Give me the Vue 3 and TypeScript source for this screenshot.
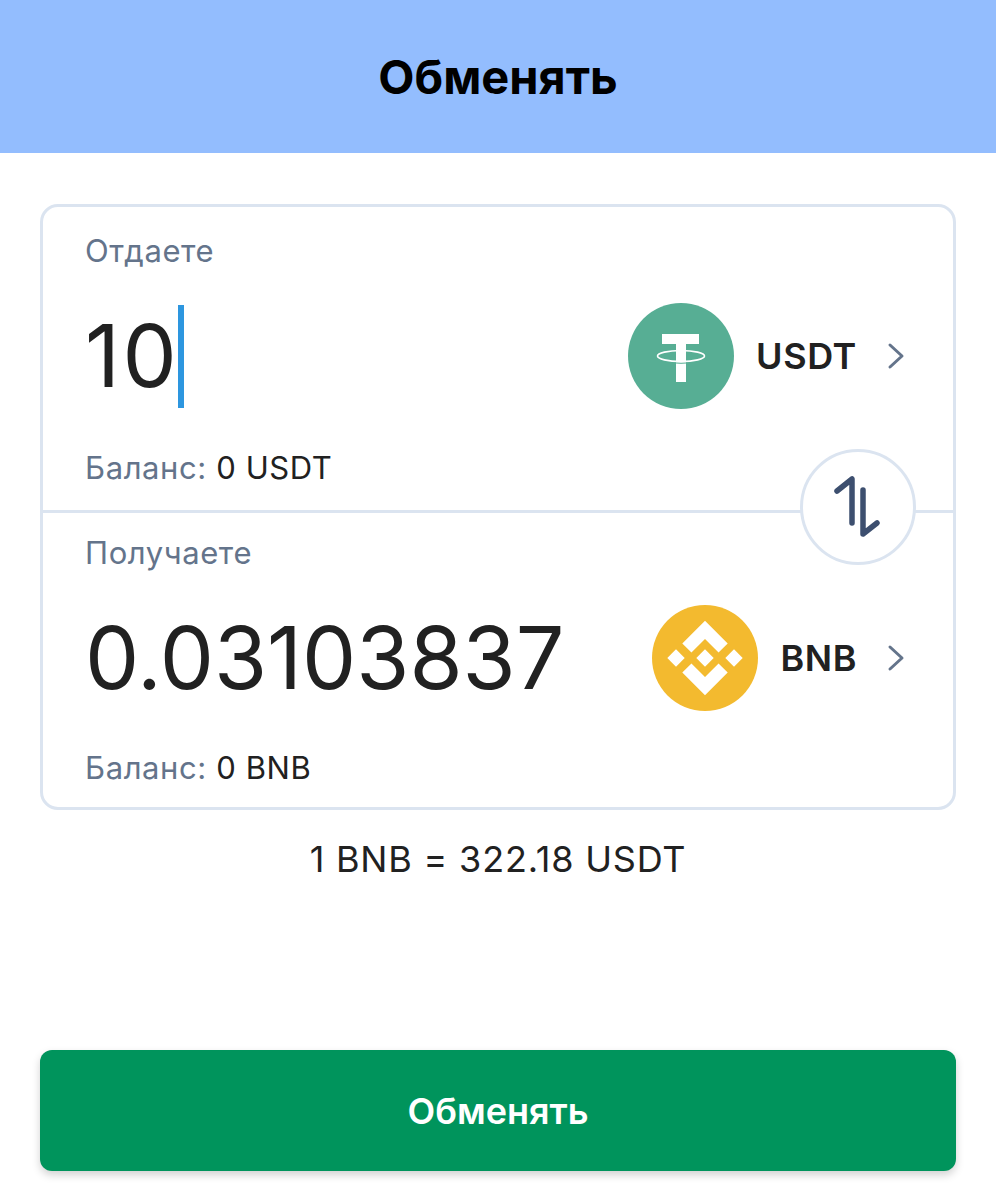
<script setup lang="ts">
interface Panel {
  label: string
  value: string
  symbol: string
  balance: string
  focused: boolean
}

const panels: Panel[] = [
  { label: 'Отдаете', value: '10', symbol: 'USDT', balance: '0 USDT', focused: true },
  { label: 'Получаете', value: '0.03103837', symbol: 'BNB', balance: '0 BNB', focused: false },
]
</script>

<template>
  <div class="page">
    <header class="header">Обменять</header>
    <main class="content">
      <section class="card">
        <div v-for="p in panels" :key="p.symbol" class="panel">
          <div class="label">{{ p.label }}</div>
          <div class="row">
            <div class="value" :class="{ editing: p.focused }">{{ p.value }}<span v-if="p.focused" class="caret"></span></div>
            <div class="token">
              <svg v-if="p.symbol === 'USDT'" class="coin" viewBox="0 0 106 106">
                <circle cx="53" cy="53" r="53" fill="#57ae94" />
                <path fill="#fff" d="M34 31h37v10H58v38H48V41H34z" />
                <ellipse cx="53" cy="53" rx="23.500" ry="5.500" fill="none" stroke="#fff" stroke-width="1.600" />
                <path d="M48 60q5 .6 10 0" fill="none" stroke="#57ae94" stroke-width="1" />
              </svg>
              <svg v-else class="coin" viewBox="0 0 106 106">
                <circle cx="53" cy="53" r="53" fill="#f3ba2f" />
                <g fill="#fff">
                  <polygon points="53,15.700 75.700,38.400 66.550,47.550 53,34 39.450,47.550 30.300,38.400" />
                  <polygon points="53,90.300 75.700,67.600 66.550,58.450 53,72 39.450,58.450 30.300,67.600" />
                  <polygon points="53,44.300 61.700,53 53,61.700 44.300,53" />
                  <polygon points="24,44.300 32.700,53 24,61.700 15.300,53" />
                  <polygon points="82,44.300 90.700,53 82,61.700 73.300,53" />
                </g>
              </svg>
              <span class="symbol">{{ p.symbol }}</span>
              <svg class="chev" viewBox="0 0 18 28">
                <path d="M3 3l12 11L3 25" fill="none" stroke="#64748b" stroke-width="3" stroke-linecap="round" stroke-linejoin="round" />
              </svg>
            </div>
          </div>
          <div class="balance"><span class="muted">Баланс:</span> {{ p.balance }}</div>
        </div>
        <button class="swap" type="button" aria-label="Поменять местами">
          <svg viewBox="0 0 48 64" class="swap-icon">
            <path d="M3 16L18 4v44" fill="none" stroke="#3d4f6f" stroke-width="5.500" stroke-linecap="round" stroke-linejoin="round" />
            <path d="M29 15v44l14-11" fill="none" stroke="#3d4f6f" stroke-width="5.500" stroke-linecap="round" stroke-linejoin="round" />
          </svg>
        </button>
      </section>
      <p class="rate">1 BNB = 322.18 USDT</p>
      <button class="submit" type="button">Обменять</button>
    </main>
  </div>
</template>

<style>
html, body { background: #fff; }
</style>

<style scoped>
.page {
  width: 996px;
  height: 1200px;
  overflow: hidden;
  background: #fff;
  font-family: Inter, "Liberation Sans", sans-serif;
  color: #212121;
}
.header {
  height: 153px;
  background: #93bdfe;
  display: flex;
  align-items: center;
  justify-content: center;
  color: #000;
  font-size: 47px;
  font-weight: 700;
}
.content {
  padding: 51px 40px 0;
  display: flex;
  flex-direction: column;
}
.card {
  position: relative;
  height: 606px;
  box-sizing: border-box;
  border: 3px solid #dbe4f0;
  border-radius: 18px;
  display: flex;
  flex-direction: column;
}
.panel {
  padding: 26px 42px 0;
  box-sizing: border-box;
  height: 303px;
}
.panel + .panel {
  border-top: 3px solid #dbe4f0;
  padding-top: 22px;
  height: 297px;
}
.label, .balance {
  font-size: 31px;
  line-height: 36px;
  letter-spacing: 0.6px;
}
.label, .muted { color: #64748b; }
.row {
  height: 106px;
  margin-top: 34px;
  display: flex;
  align-items: center;
  justify-content: space-between;
}
.panel + .panel .row { margin-top: 34px; }
.panel + .panel .balance { margin-top: 39px; }
.value {
  display: flex;
  align-items: center;
  font-size: 86px;
  line-height: 106px;
  color: #212121;
  font-weight: 380;
}
.value.editing {
  letter-spacing: 2.500px;
}
.caret {
  width: 6px;
  height: 103px;
  background: #2d96df;
  margin-left: -1px;
}
.token {
  display: flex;
  align-items: center;
}
.coin {
  width: 106px;
  height: 106px;
  flex: none;
}
.symbol {
  margin-left: 22px;
  font-size: 36px;
  font-weight: 560;
  letter-spacing: 0.6px;
  color: #212121;
}
.chev {
  width: 18px;
  height: 28px;
  margin-left: 30px;
  margin-right: 6px;
}
.balance {
  margin-top: 41px;
}
.swap {
  position: absolute;
  right: 37px;
  top: 242px;
  width: 116px;
  height: 116px;
  box-sizing: border-box;
  border: 3px solid #dbe4f0;
  border-radius: 50%;
  background: #fff;
  padding: 0;
  display: flex;
  align-items: center;
  justify-content: center;
}
.swap-icon {
  width: 48px;
  height: 64px;
}
.rate {
  margin: 27px 0 0;
  text-align: center;
  font-size: 36px;
  line-height: 44px;
  letter-spacing: 0.8px;
  font-weight: 380;
}
.submit {
  margin-top: 169px;
  height: 121px;
  border: none;
  border-radius: 12px;
  background: #00945c;
  color: #fff;
  font: 580 36px Inter, "Liberation Sans", sans-serif;
  box-shadow: 0 4px 8px rgba(0, 0, 0, 0.18);
}
</style>
